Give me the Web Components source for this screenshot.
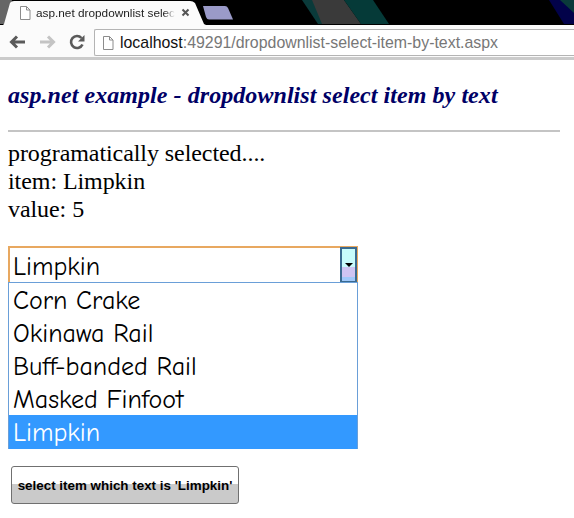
<!DOCTYPE html>
<html>
<head>
<meta charset="utf-8">
<title>asp.net dropdownlist select item by text</title>
<style>
  html, body { margin: 0; padding: 0; background: #fff; overflow: hidden; }
</style>
</head>
<body>
<browser-chrome></browser-chrome>
<demo-page>
  <drop-down value="Limpkin">
    <drop-option>Corn Crake</drop-option>
    <drop-option>Okinawa Rail</drop-option>
    <drop-option>Buff-banded Rail</drop-option>
    <drop-option>Masked Finfoot</drop-option>
    <drop-option selected>Limpkin</drop-option>
  </drop-down>
</demo-page>
<script>
class BrowserChrome extends HTMLElement {
  connectedCallback() {
    const shadow = this.attachShadow({ mode: 'open' });
    shadow.innerHTML = `
      <style>
        :host { display: block; }
        .tabs { height: 25px; background: #000; position: relative; overflow: hidden; }
        .art { position: absolute; left: 0; top: 0; }
        .tab-icon { position: absolute; left: 19px; top: 6px; }
        .tab-title { position: absolute; left: 36px; top: 6px; white-space: nowrap; font: 11.800px "Liberation Sans", sans-serif; color: #222;
          -webkit-mask-image: linear-gradient(90deg, #000 92%, transparent); mask-image: linear-gradient(90deg, #000 92%, transparent); }
        .tab-close { position: absolute; left: 181px; top: 8px; }
        .toolbar { height: 32px; background: #fbfbfb; display: flex; align-items: flex-start; padding-top: 4px; box-sizing: border-box; }
        .nav { display: flex; gap: 13px; align-items: center; padding: 5px 0 0 9px; width: 94px; box-sizing: border-box; flex: none; }
        .url { flex: 1; height: 27px; box-sizing: border-box; background: #fff; border: 1px solid #b4b4b4; border-right: 0; border-radius: 2px 0 0 2px; display: flex; align-items: center; gap: 6px; padding-left: 7px; font: 15.900px "Liberation Sans", sans-serif; color: #777; white-space: nowrap; }
        .url b { font-weight: normal; color: #111; }
        .band { height: 3px; background: #cbcbcb; }
      </style>
      <div class="tabs">
        <svg class="art" width="574" height="25">
          <path d="M302 0h12l18 24h-14z" fill="#0a3a3a"/>
          <path d="M312 0h32l17 24h-39z" fill="#3a3a3a"/>
          <path d="M344 0h29l16 24h-28z" fill="#053a38"/>
          <path d="M549 0h25v24h-10z" fill="#02024a"/>
          <path d="M560 0h14v13z" fill="#0a3a3a"/>
          <path d="M0 24V0H12L5 24z" fill="#666"/>
          <path d="M3 25L4 24 10 3Q11 1 14 1H190Q193 1 195 3L204 24 206 25z" fill="#fbfbfb"/>
          <path d="M203 6H225Q227 6 228 8L233 19.500H209Q207 19.500 206 17z" fill="#9a9ac8"/>
        </svg>
        <svg class="tab-icon" width="12" height="14"><path d="M1.500.5h6l3.500 3.500v9.500h-9.500zM7.500.5v3.500h3.500" fill="#fff" stroke="#8c8c8c"/></svg>
        <span class="tab-title">asp.net dropdownlist selec</span>
        <svg class="tab-close" width="10" height="10"><path d="M1.500 1.500l6 6M7.500 1.500l-6 6" stroke="#555" stroke-width="2"/></svg>
      </div>
      <div class="toolbar">
        <div class="nav">
          <svg width="17" height="14"><path d="M8 1.500L2.500 7 8 12.500M3 7h13" fill="none" stroke="#5a5a5a" stroke-width="3"/></svg>
          <svg width="17" height="14"><path d="M9 1.500L14.500 7 9 12.500M14 7H1" fill="none" stroke="#c4c4c4" stroke-width="3"/></svg>
          <svg width="17" height="16"><path d="M13.500 10.500A6 6 0 1 1 12.500 4" fill="none" stroke="#5a5a5a" stroke-width="2.600"/><path d="M15.500 1v6.500h-6.500z" fill="#5a5a5a"/></svg>
        </div>
        <div class="url">
          <svg width="12" height="16"><path d="M1.500 1.500h6l3.500 3.500v9.500h-9.500zM7.500 1.500v3.500h3.500" fill="#fff" stroke="#8c8c8c"/></svg>
          <span><b>localhost</b>:49291/dropdownlist-select-item-by-text.aspx</span>
        </div>
      </div>
      <div class="band"></div>`;
  }
}

class DemoPage extends HTMLElement {
  connectedCallback() {
    const shadow = this.attachShadow({ mode: 'open' });
    shadow.innerHTML = `
      <style>
        :host { display: block; padding: 0 14px 0 8px; font: 24px/28px "Liberation Serif", serif; color: #000; }
        h2 { margin: 0; padding-top: 21px; height: 49px; font: italic bold 24px/28px "Liberation Serif", serif; letter-spacing: .06px; color: #000066; }
        hr { margin: 0 0 7px; height: 2px; border: 0; background: #c4c4c4; }
        .info { margin-bottom: 23px; letter-spacing: -.07px; }
        button { display: block; margin: 17px 0 0 3px; width: 228px; height: 38px; padding: 0; border: 1px solid #707070; border-radius: 3px; font: bold 13.400px "Liberation Sans", sans-serif; color: #000; background: linear-gradient(#fff 0, #fff 47%, #cacaca 47%, #cacaca 100%); }
      </style>
      <h2>asp.net example - dropdownlist select item by text</h2>
      <hr>
      <div class="info">programatically selected....<br>item: Limpkin<br>value: 5</div>
      <slot></slot>
      <button>select item which text is 'Limpkin'</button>`;
  }
}

class DropDown extends HTMLElement {
  connectedCallback() {
    const shadow = this.attachShadow({ mode: 'open' });
    shadow.innerHTML = `
      <style>
        :host { display: block; width: 350px; font-family: "Comic Sans MS", "Comic Neue", cursive; font-size: 26px; color: #000; }
        .box { height: 36px; box-sizing: border-box; border: solid #e8a860; border-width: 2px 1px 0 2px; display: flex; justify-content: space-between; padding-left: 3px; }
        .box span { line-height: 38px; }
        .arrow { width: 17px; height: 35px; margin-top: -1px; box-sizing: border-box; border: 2px solid #3a6a90; border-bottom-width: 1px; background: linear-gradient(#c8fbfb 0, #c8fbfb 56%, #cfc4f2 56%, #cfc4f2 86%, #a0c8fa 86%); display: flex; justify-content: center; padding-top: 14px; }
        .arrow i { display: block; width: 0; height: 0; border: 4px solid transparent; border-top: 4px solid #000; border-bottom: 0; }
        .list { border: 1px solid #6a9fd8; border-width: 1px 1px 0; }
      </style>
      <div class="box"><span>${this.getAttribute('value')}</span><div class="arrow"><i></i></div></div>
      <div class="list"><slot></slot></div>`;
  }
}

class DropOption extends HTMLElement {
  connectedCallback() {
    const shadow = this.attachShadow({ mode: 'open' });
    shadow.innerHTML = `
      <style>
        :host { display: block; height: 33px; line-height: 37px; padding-left: 4px; white-space: nowrap; }
        :host([selected]) { height: 34px; background: #3399ff; color: #fff; }
      </style>
      <slot></slot>`;
  }
}

customElements.define('browser-chrome', BrowserChrome);
customElements.define('demo-page', DemoPage);
customElements.define('drop-down', DropDown);
customElements.define('drop-option', DropOption);
</script>
</body>
</html>
